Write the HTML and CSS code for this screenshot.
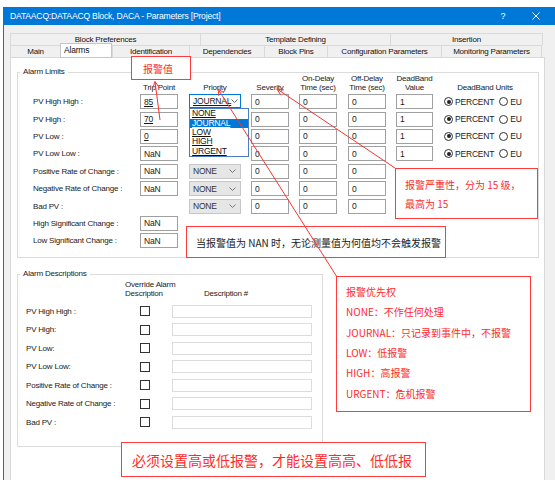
FILE: index.html
```html
<!DOCTYPE html>
<html lang="zh">
<head>
<meta charset="utf-8">
<title>DATAACQ Parameters</title>
<link rel="stylesheet" href="styles.css">
</head>
<body>
<div class="page">
  <div class="topstrip"></div>
  <div class="window">
    <div class="titlebar">
      <span class="title">DATAACQ:DATAACQ Block, DACA - Parameters [Project]</span>
      <span class="tb-btn q">?</span>
      <span class="tb-btn x"><svg width="8" height="8" viewBox="0 0 8 8"><path d="M0.5 0.5 L7.5 7.5 M7.5 0.5 L0.5 7.5" stroke="#fff" stroke-width="1" fill="none"/></svg></span>
    </div>
    <div class="dialog">
      <div class="tabs">
        <div class="tabrow">
          <div class="tab t-bp">Block Preferences</div>
          <div class="tab t-td">Template Defining</div>
          <div class="tab t-ins">Insertion</div>
        </div>
        <div class="tabrow">
          <div class="tab t-main">Main</div>
          <div class="tab t-alarms sel">Alarms</div>
          <div class="tab t-id">Identification</div>
          <div class="tab t-dep">Dependencies</div>
          <div class="tab t-pins">Block Pins</div>
          <div class="tab t-cfg">Configuration Parameters</div>
          <div class="tab t-mon">Monitoring Parameters</div>
        </div>
      </div>
      <div class="panel">
        <fieldset class="group limits">
          <legend>Alarm Limits</legend>
          <div class="lgrid">
            <div></div>
            <div class="hd"><span>Trip Point</span></div>
            <div class="hd hd-sel"><span>Priority</span></div>
            <div class="hd"><span>Severity</span></div>
            <div class="hd"><span>On-Delay<br>Time (sec)</span></div>
            <div class="hd"><span>Off-Delay<br>Time (sec)</span></div>
            <div class="hd hd-db"><span>DeadBand<br>Value</span></div>
            <div class="hd hd-units"><span>DeadBand Units</span></div>

            <div class="lbl">PV High High :</div>
            <div class="inp"><span class="u">85</span></div>
            <div class="sel open">
              <span class="u">JOURNAL</span>
              <svg class="chev" width="7" height="4" viewBox="0 0 7 4"><path d="M0.5 0.5 L3.5 3.5 L6.5 0.5" stroke="#666" fill="none"/></svg>
              <ul class="dropdown">
                <li>NONE</li>
                <li class="hi">JOURNAL</li>
                <li>LOW</li>
                <li>HIGH</li>
                <li>URGENT</li>
              </ul>
            </div>
            <div class="inp">0</div>
            <div class="inp">0</div>
            <div class="inp">0</div>
            <div class="inp db">1</div>
            <div class="units"><span class="radio on"></span><span class="rl">PERCENT</span><span class="radio"></span><span class="rl">EU</span></div>

            <div class="lbl">PV High :</div>
            <div class="inp"><span class="u">70</span></div>
            <div></div>
            <div class="inp">0</div>
            <div class="inp">0</div>
            <div class="inp">0</div>
            <div class="inp db">1</div>
            <div class="units"><span class="radio on"></span><span class="rl">PERCENT</span><span class="radio"></span><span class="rl">EU</span></div>

            <div class="lbl">PV Low :</div>
            <div class="inp"><span class="u">0</span></div>
            <div></div>
            <div class="inp">0</div>
            <div class="inp">0</div>
            <div class="inp">0</div>
            <div class="inp db">1</div>
            <div class="units"><span class="radio on"></span><span class="rl">PERCENT</span><span class="radio"></span><span class="rl">EU</span></div>

            <div class="lbl">PV Low Low :</div>
            <div class="inp">NaN</div>
            <div></div>
            <div class="inp">0</div>
            <div class="inp">0</div>
            <div class="inp">0</div>
            <div class="inp db">1</div>
            <div class="units"><span class="radio on"></span><span class="rl">PERCENT</span><span class="radio"></span><span class="rl">EU</span></div>

            <div class="lbl">Positive Rate of Change :</div>
            <div class="inp">NaN</div>
            <div class="sel dis"><span>NONE</span><svg class="chev" width="7" height="4" viewBox="0 0 7 4"><path d="M0.5 0.5 L3.5 3.5 L6.5 0.5" stroke="#777" fill="none"/></svg></div>
            <div class="inp">0</div>
            <div class="inp">0</div>
            <div class="inp">0</div>
            <div></div>
            <div></div>

            <div class="lbl">Negative Rate of Change :</div>
            <div class="inp">NaN</div>
            <div class="sel dis"><span>NONE</span><svg class="chev" width="7" height="4" viewBox="0 0 7 4"><path d="M0.5 0.5 L3.5 3.5 L6.5 0.5" stroke="#777" fill="none"/></svg></div>
            <div class="inp">0</div>
            <div class="inp">0</div>
            <div class="inp">0</div>
            <div></div>
            <div></div>

            <div class="lbl">Bad PV :</div>
            <div></div>
            <div class="sel dis"><span>NONE</span><svg class="chev" width="7" height="4" viewBox="0 0 7 4"><path d="M0.5 0.5 L3.5 3.5 L6.5 0.5" stroke="#777" fill="none"/></svg></div>
            <div class="inp">0</div>
            <div class="inp">0</div>
            <div class="inp">0</div>
            <div></div>
            <div></div>

            <div class="lbl">High Significant Change :</div>
            <div class="inp">NaN</div>
            <div class="span-rest"></div>

            <div class="lbl">Low Significant Change :</div>
            <div class="inp">NaN</div>
            <div class="span-rest"></div>
          </div>
        </fieldset>

        <fieldset class="group desc">
          <legend>Alarm Descriptions</legend>
          <div class="dgrid">
            <div></div>
            <div class="dh">Override Alarm<br>Description</div>
            <div class="dh dh-num">Description #</div>

            <div class="lbl">PV High High :</div><div><span class="cb"></span></div><div class="dinp"></div>
            <div class="lbl">PV High:</div><div><span class="cb"></span></div><div class="dinp"></div>
            <div class="lbl">PV Low:</div><div><span class="cb"></span></div><div class="dinp"></div>
            <div class="lbl">PV Low Low:</div><div><span class="cb"></span></div><div class="dinp"></div>
            <div class="lbl">Positive Rate of Change :</div><div><span class="cb"></span></div><div class="dinp"></div>
            <div class="lbl">Negative Rate of Change :</div><div><span class="cb"></span></div><div class="dinp"></div>
            <div class="lbl">Bad PV :</div><div><span class="cb"></span></div><div class="dinp"></div>
          </div>
        </fieldset>
      </div>
    </div>
  </div>

  <div class="note note-val">报警值</div>
  <div class="note note-sev">报警严重性，分为 15 级，<br>最高为 15</div>
  <div class="note note-nan">当报警值为 NAN 时，无论测量值为何值均不会触发报警</div>
  <div class="note note-prio">报警优先权<br>NONE：不作任何处理<br>JOURNAL：只记录到事件中，不报警<br>LOW：低报警<br>HIGH：高报警<br>URGENT：危机报警</div>
  <div class="note note-bottom">必须设置高或低报警，才能设置高高、低低报</div>

  <svg class="arrows" width="555" height="480" viewBox="0 0 555 480">
    <g stroke="#ff3030" stroke-width="1" fill="none">
      <path d="M160 120 L155 81.5"/>
      <path d="M152.9 87.7 L155 81.5 L158.7 86.9"/>
      <path d="M337 277 L218 89"/>
      <path d="M218.9 95.9 L218 89 L223.9 92.8"/>
      <path d="M395 168 L277 89"/>
      <path d="M280.7 95 L277 89 L283.9 90"/>
    </g>
  </svg>
</div>
</body>
</html>
```

FILE: styles.css
```css
* { box-sizing: border-box; }
html, body { margin: 0; padding: 0; }
body {
  width: 555px;
  height: 480px;
  overflow: hidden;
  background: #fff;
  font-family: "Liberation Sans", Arial, sans-serif;
  font-size: 8px;
  letter-spacing: -0.2px;
  color: #1a1a1a;
}
.page { position: relative; width: 555px; height: 480px; overflow: hidden; }
.topstrip { height: 7px; background: #fff; }

.window {
  margin-left: 3px;
  border-left: 1px solid #0078d7;
  height: 473px;
  display: flex;
  flex-direction: column;
}
.titlebar {
  height: 18px;
  flex: none;
  background: #0078d7;
  color: #fff;
  display: flex;
  align-items: center;
  padding: 0 8px 0 6px;
  font-size: 8.6px;
}
.title { flex: 1; white-space: nowrap; }
.tb-btn { display: flex; align-items: center; justify-content: center; }
.tb-btn.q { width: 14px; margin-right: 15px; font-size: 9px; }
.tb-btn.x { width: 22px; }

.dialog {
  flex: 1;
  background: #f0f0f0;
  padding: 8px 10px 0 6px;
}
.tabs { width: 533px; }
.tabrow { display: flex; height: 12px; }
.tab {
  height: 12px;
  display: flex;
  align-items: center;
  justify-content: center;
  white-space: nowrap;
  border-left: 1px solid #d9d9d9;
  border-top: 1px solid #d9d9d9;
  background: #f0f0f0;
  color: #111;
}
.tabrow .tab:last-child { border-right: 1px solid #d9d9d9; }
.t-bp { width: 190px; }
.t-td { width: 190px; }
.t-ins { width: 153px; }
.t-main { width: 50px; }
.t-alarms { width: 53px; }
.t-id { width: 77px; }
.t-dep { width: 75px; }
.t-pins { width: 63px; }
.t-cfg { width: 114px; }
.t-mon { width: 101px; }
.tab.sel {
  background: #fff;
  height: 15px;
  margin-top: -2px;
  padding-bottom: 1px;
  position: relative;
  z-index: 2;
}
.tab.sel + .tab { border-left-color: #d9d9d9; }

.panel {
  width: 535px;
  height: 430px;
  background: #fff;
  border: 1px solid #d9d9d9;
  padding: 0 5px 0 6px;
}

.group {
  margin: 0;
  padding: 0;
  min-width: 0;
  border: 1px solid #dcdcdc;
}
.group legend {
  margin-left: 2px;
  padding: 0 3px;
  line-height: 8px;
  font-size: 8px;
  color: #1a1a1a;
}
.limits { margin-top: 10px; padding-bottom: 7.5px; }
.desc { margin-top: 12px; width: 306px; padding-bottom: 14.5px; }

.lgrid {
  display: grid;
  grid-template-columns: 107px 49px 62px 48px 49px 48px 44px 1fr;
  grid-template-rows: 19px repeat(9, 17.4px);
  margin: -2px 0 0 15px;
  align-items: center;
}
.hd {
  align-self: end;
  width: 38px;
  display: flex;
  justify-content: center;
  padding-bottom: 0.5px;
  color: #222;
}
.hd span { white-space: nowrap; text-align: center; line-height: 9.5px; }
.hd-sel { width: 52px; }
.hd-db { width: 37px; }
.hd-units { width: 90px; padding-bottom: 0; }
.hd-units span { position: relative; top: -0.5px; }
.lbl { white-space: nowrap; color: #1a1a1a; }
.inp {
  width: 38px;
  height: 15px;
  border: 1px solid #a0a0a0;
  background: #fff;
  font-size: 8.5px;
  padding-left: 3px;
  display: flex;
  align-items: center;
}
.inp.db { width: 37px; }
.u { text-decoration: underline; }
.span-rest { grid-column: span 6; }

.sel {
  width: 52px;
  height: 15px;
  border: 1px solid #c6c6c6;
  display: flex;
  align-items: center;
  justify-content: space-between;
  padding: 0 4px 0 3px;
  font-size: 8.5px;
}
.sel.open {
  position: relative;
  height: 14px;
  margin-top: -1px;
  border-color: #0078d7;
  background: #fff;
  color: #1a1a1a;
}
.sel.dis { background: #e6e6e6; color: #333; }
.chev { flex: none; }
.dropdown {
  position: absolute;
  top: 13px;
  left: -1px;
  width: 60px;
  margin: 0;
  padding: 0;
  list-style: none;
  background: #fff;
  border: 1px solid #4a7fc2;
  z-index: 3;
}
.dropdown li {
  height: 9.4px;
  line-height: 9.4px;
  padding-left: 2px;
  text-decoration: underline;
  color: #111;
}
.dropdown li.hi { background: #0078d7; color: #fff; }

.units {
  display: flex;
  align-items: center;
  padding-left: 4px;
  font-size: 8.5px;
}
.radio {
  width: 9px;
  height: 9px;
  border: 1px solid #333;
  border-radius: 50%;
  background: #fff;
  flex: none;
  display: flex;
  align-items: center;
  justify-content: center;
}
.radio.on::after {
  content: "";
  width: 4px;
  height: 4px;
  border-radius: 50%;
  background: #222;
}
.rl { margin-left: 2px; margin-right: 5px; }

.dgrid {
  display: grid;
  grid-template-columns: 99px 47px 140px;
  grid-template-rows: 24px repeat(7, 18.5px);
  margin-left: 8px;
  align-items: center;
}
.dh {
  align-self: end;
  margin-bottom: 4.5px;
  line-height: 9px;
  white-space: nowrap;
  color: #222;
}
.dh-num { margin-left: 32px; }
.cb {
  display: block;
  width: 10px;
  height: 10px;
  margin-left: 15px;
  border: 1px solid #333;
  background: #fff;
}
.dinp {
  width: 140px;
  height: 13px;
  border: 1px solid #dcdcdc;
  background: #fff;
}

.note {
  position: absolute;
  background: #fff;
  border: 1px solid #ff3b3b;
  color: #ff2a2a;
  font-family: "Noto Sans CJK SC", "Liberation Sans", sans-serif;
  font-size: 10px;
  letter-spacing: 0;
  z-index: 5;
  white-space: nowrap;
}
.note-val {
  left: 131px; top: 56px; width: 60px; height: 24px;
  display: flex; align-items: center; padding-left: 11px;
}
.note-sev {
  left: 395px; top: 168px; width: 143px; height: 51px;
  line-height: 19px; padding: 5.5px 0 0 9px;
}
.note-nan {
  left: 186px; top: 226px; width: 260px; height: 32px;
  display: flex; align-items: center; padding-left: 9px;
  color: #222;
}
.note-prio {
  left: 336px; top: 276px; width: 195px; height: 136px;
  line-height: 20.4px; padding: 4.8px 0 0 9px;
}
.note-bottom {
  left: 121px; top: 442px; width: 305px; height: 35px;
  display: flex; align-items: center; padding-left: 10px;
  font-size: 14px;
}
.arrows {
  position: absolute;
  left: 0;
  top: 0;
  z-index: 6;
  pointer-events: none;
}
```
